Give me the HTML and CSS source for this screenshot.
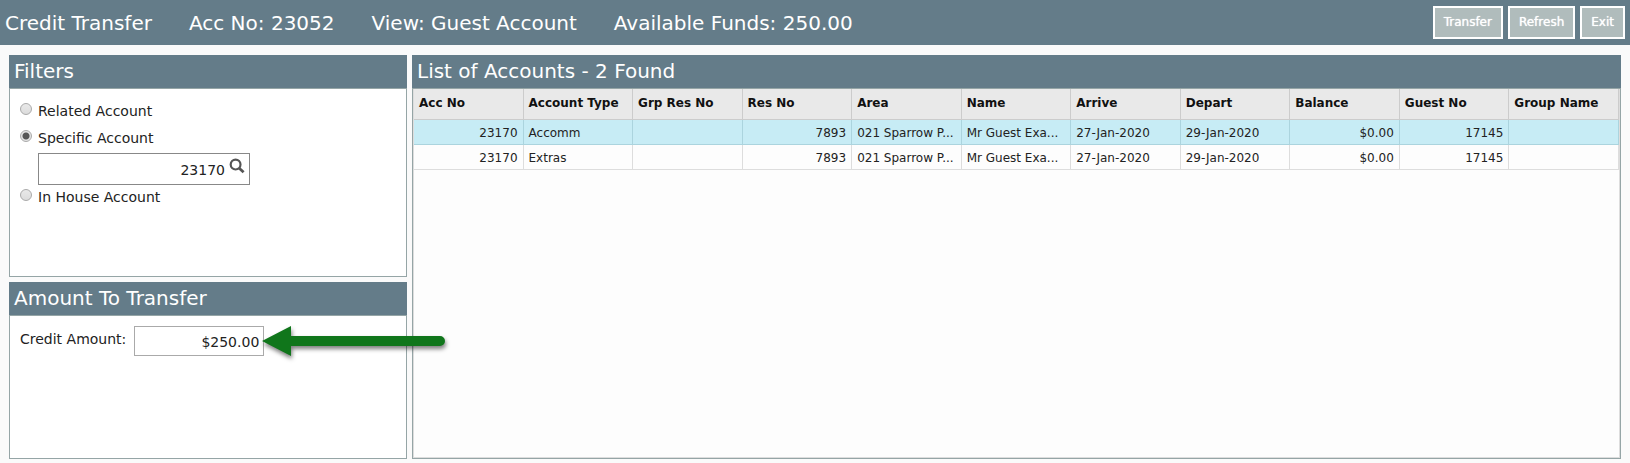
FILE: index.html
```html
<!DOCTYPE html>
<html lang="en">
<head>
  <meta charset="UTF-8" />
  <title>Credit Transfer</title>
  <meta name="viewport" content="width=device-width, initial-scale=1.0" />
  <link rel="stylesheet" href="styles.css">
</head>
<body>
  <header class="topbar">
    <h1 class="title">Credit Transfer</h1>
    <span>Acc No: 23052</span>
    <span>View: Guest Account</span>
    <span>Available Funds: 250.00</span>
    <div class="actions">
      <button class="btn" type="button">Transfer</button>
      <button class="btn" type="button">Refresh</button>
      <button class="btn" type="button">Exit</button>
    </div>
  </header>

  <main class="layout">
    <div class="side">
      <section class="panel filters">
        <h2>Filters</h2>
        <div class="panel-body">
          <label class="option"><input type="radio" name="filter" /><span>Related Account</span></label>
          <label class="option"><input type="radio" name="filter" checked /><span>Specific Account</span></label>
          <div class="search">
            <input type="text" value="23170" aria-label="Account number" />
            <button type="button" class="search-btn" aria-label="Search">
              <svg width="16" height="16" viewBox="0 0 16 16">
                <circle cx="6.6" cy="6.6" r="4.9" fill="none" stroke="#555" stroke-width="2.2" />
                <path d="M10 10 L14.6 14.2" stroke="#555" stroke-width="2.8" />
              </svg>
            </button>
          </div>
          <label class="option"><input type="radio" name="filter" /><span>In House Account</span></label>
        </div>
      </section>

      <section class="panel amount">
        <h2>Amount To Transfer</h2>
        <div class="panel-body">
          <div class="field">
            <label for="credit">Credit Amount:</label>
            <div class="credit-box">
              <input type="text" id="credit" value="$250.00" />
              <svg class="arrow" width="194" height="44" viewBox="0 0 194 44">
                <path d="M1 20 L30 5 V15 H179 A5 5 0 0 1 179 25 H30 V35 Z" fill="#10761b" />
              </svg>
            </div>
          </div>
        </div>
      </section>
    </div>

    <section class="panel list">
      <h2>List of Accounts - 2 Found</h2>
      <div class="grid">
        <table>
          <thead>
            <tr>
              <th>Acc No</th>
              <th>Account Type</th>
              <th>Grp Res No</th>
              <th>Res No</th>
              <th>Area</th>
              <th>Name</th>
              <th>Arrive</th>
              <th>Depart</th>
              <th>Balance</th>
              <th>Guest No</th>
              <th>Group Name</th>
            </tr>
          </thead>
          <tbody>
            <tr class="selected">
              <td class="num">23170</td>
              <td>Accomm</td>
              <td></td>
              <td class="num">7893</td>
              <td>021 Sparrow P...</td>
              <td>Mr Guest Exa...</td>
              <td>27-Jan-2020</td>
              <td>29-Jan-2020</td>
              <td class="num">$0.00</td>
              <td class="num">17145</td>
              <td></td>
            </tr>
            <tr>
              <td class="num">23170</td>
              <td>Extras</td>
              <td></td>
              <td class="num">7893</td>
              <td>021 Sparrow P...</td>
              <td>Mr Guest Exa...</td>
              <td>27-Jan-2020</td>
              <td>29-Jan-2020</td>
              <td class="num">$0.00</td>
              <td class="num">17145</td>
              <td></td>
            </tr>
          </tbody>
        </table>
      </div>
    </section>
  </main>
</body>
</html>
```
FILE: styles.css
```css
:root {
  --slate: #647c89;
  --line: #95a5a6;
  --grid-line: #dddddd;
}

* {
  box-sizing: border-box;
  font-family: Verdana, 'DejaVu Sans', sans-serif;
  margin: 0;
  padding: 0;
}

body {
  background: #fafafa;
  color: #222;
  font-size: 14px;
  min-height: 100vh;
  display: flex;
  flex-direction: column;
}

/* top bar */
.topbar {
  display: flex;
  align-items: center;
  gap: 37px;
  height: 45px;
  padding: 0 5px;
  background: var(--slate);
  color: #fff;
  font-size: 20px;
  line-height: 24px;
  white-space: nowrap;
}

.title {
  font-size: 20px;
  font-weight: normal;
}

.actions {
  display: flex;
  gap: 5px;
  margin-left: auto;
}

.btn {
  height: 33px;
  padding: 0 9px 2px;
  border: 2px solid #fff;
  background: #b0bcbc;
  color: #fff;
  font-size: 12px;
  text-shadow: 0 0 1px #fff;
  cursor: pointer;
}

/* panels */
.layout {
  flex: 1;
  display: grid;
  grid-template-columns: 398px 1fr;
  gap: 5px;
  padding: 10px 9px 4px;
}

.side {
  display: flex;
  flex-direction: column;
  gap: 5px;
}

.panel {
  display: flex;
  flex-direction: column;
  min-width: 0;
}

.filters {
  min-height: 222px;
}

.amount {
  flex: 1;
}

h2 {
  height: 33px;
  padding: 0 5px;
  background: var(--slate);
  color: #fff;
  font-size: 20px;
  font-weight: normal;
  line-height: 32px;
}

.panel-body {
  flex: 1;
  padding: 10px;
  border: 1px solid var(--line);
  background: #fff;
}

/* filters */
.option {
  display: flex;
  gap: 6px;
  height: 27px;
  line-height: 24px;
}

.option input {
  appearance: none;
  width: 12px;
  height: 12px;
  margin-top: 4px;
  border: 1px solid #aaa;
  border-radius: 50%;
  background: linear-gradient(#e9e9e9, #dcdcdc);
}

.option input:checked {
  background: radial-gradient(circle, #555 0 3px, #e4e4e4 4px);
}

.search {
  display: flex;
  width: 212px;
  height: 32px;
  margin-left: 18px;
  border: 1px solid #888;
}

.search input {
  flex: 1;
  min-width: 0;
  padding-top: 2px;
  border: none;
  background: none;
  color: #222;
  font-size: 14px;
  text-align: right;
}

.search-btn {
  width: 24px;
  padding: 0 4px 7px;
  border: none;
  background: none;
  line-height: 0;
  cursor: pointer;
}

/* amount */
.field {
  display: flex;
  gap: 8px;
  line-height: 26px;
}

.credit-box {
  position: relative;
}

.credit-box input {
  display: block;
  width: 130px;
  height: 30px;
  padding: 2px 4px 0;
  border: 1px solid #aaa;
  background: #fff;
  color: #222;
  font-size: 14px;
  text-align: right;
}

.arrow {
  position: absolute;
  top: -5px;
  left: 127px;
  z-index: 1;
  overflow: visible;
  filter: drop-shadow(1px 3px 2px rgba(0, 0, 0, 0.5));
}

/* account list */
.grid {
  flex: 1;
  border: 1px solid var(--line);
  background: #fdfdfd;
  box-shadow: inset 0 0 0 1px var(--grid-line);
  padding: 0 1px;
}

table {
  width: 100%;
  border-collapse: separate;
  border-spacing: 0;
  table-layout: fixed;
  font-size: 12px;
}

th, td {
  padding: 2px 5px 0;
  border-right: 1px solid var(--grid-line);
  border-bottom: 1px solid var(--grid-line);
  overflow: hidden;
  text-align: left;
  white-space: nowrap;
}

th {
  height: 31px;
  padding-bottom: 4px;
  background: #e9e9e9;
  border-color: #ccc;
  color: #111;
}

td {
  height: 25px;
}

.num {
  text-align: right;
}

.selected td {
  background: #c7ecf5;
  border-color: #abd4de;
}
```
